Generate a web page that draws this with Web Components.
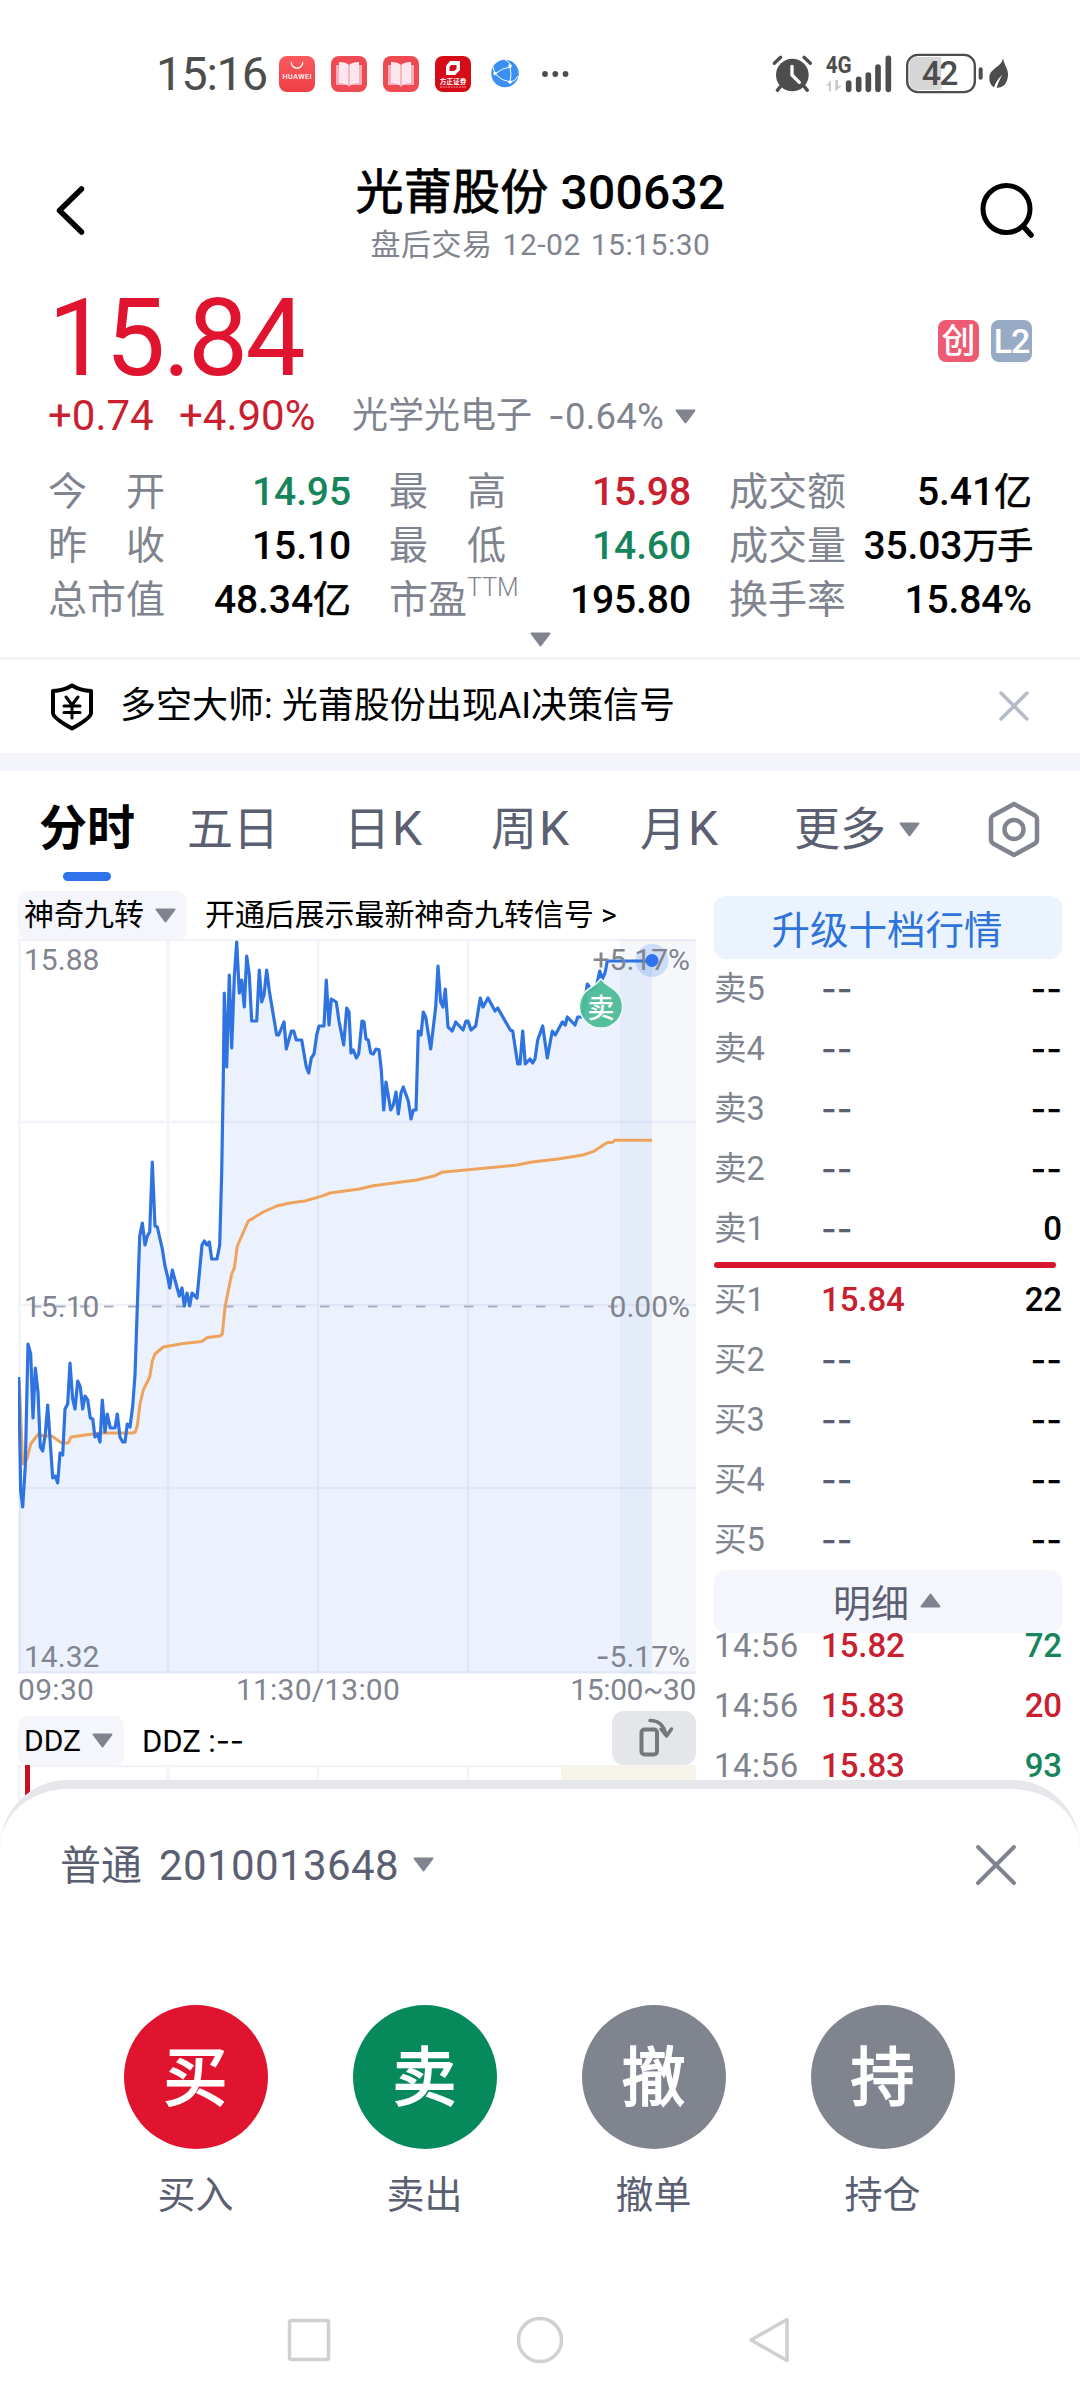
<!DOCTYPE html>
<html lang="zh-CN">
<head>
<meta charset="utf-8">
<title>光莆股份 300632</title>
<style>
html, body {
  margin: 0;
  background: #fff;
}

body {
  --red: #e0142e;
  --red-text: #c8202f;
  --green: #17855c;
  --gray: #80848f;
  --slate: #5a6072;
  --blue: #2f73ec;
  color: #000;
  font-family: Roboto, "Noto Sans CJK SC", sans-serif;
  height: 2400px;
  overflow: hidden;
  width: 1080px;
}
</style>
</head>
<body>
<stock-app></stock-app>

<script>
const define = (name, html, setup) => {
  const template = document.createElement('template');
  template.innerHTML = html;

  window.customElements.define(name, class extends HTMLElement {
    constructor () {
      super();
      this.attachShadow({ mode: 'open' });
      this.shadowRoot.appendChild(template.content.cloneNode(true));
      if (setup) {
        setup(this, this.shadowRoot);
      }
    }
  });
};

// small rounded triangle, pointing down unless [up] is set
define('caret-icon', `<style>
:host {
  display: block;
  flex: none;
  height: 15px;
  width: 21px;
}
:host([up]) {
  transform: scaleY(-1);
}
svg {
  display: block;
}
</style>
<svg width="21" height="15" viewBox="0 0 21 15">
  <path d="M1.500 1.500H19.500L10.500 13.500Z" fill="#80848f" stroke="#80848f" stroke-width="2" stroke-linejoin="round" />
</svg>`);

define('status-bar', `<style>
:host {
  align-items: center;
  box-sizing: border-box;
  color: #4d4d4d;
  display: flex;
  height: 147px;
  padding: 0 70px 0 156px;
}
.time {
  font-size: 47px;
  letter-spacing: -1.2px;
  line-height: 60px;
  width: 123px;
}
.apps {
  display: flex;
  gap: 16px;
}
.dots {
  margin-left: 19px;
}
.system {
  align-items: center;
  display: flex;
  margin-left: auto;
}
svg {
  display: block;
  flex: none;
  overflow: visible;
}
</style>
<div class="time">15:16</div>
<div class="apps">
  <svg width="36" height="36" viewBox="0 0 36 36">
    <defs>
      <linearGradient id="g" x1="0" y1="0" x2="0" y2="1"><stop offset="0" stop-color="#fa5a5d" /><stop offset="1" stop-color="#ee3f46" /></linearGradient>
    </defs>
    <rect width="36" height="36" rx="8" fill="url(#g)" />
    <path d="M12.3 6.5a5.7 5.7 0 0 0 11.4 0" fill="none" stroke="#fff" stroke-width="1.3" stroke-linecap="round" />
    <text x="18" y="23" font-size="7.2" font-weight="500" fill="#fff" text-anchor="middle" textLength="29">HUAWEI</text>
  </svg>
  <svg width="36" height="36" viewBox="0 0 36 36">
    <rect width="36" height="36" rx="8" fill="#ee4a52" />
    <path d="M5 9H31V29H20L18 31L16 29H5Z" fill="#f9aebb" />
    <path d="M8 6Q15 6 18 9Q21 6 28 6V27Q21 27 18 30Q15 27 8 27Z" fill="#fde6ee" />
    <path d="M18 8V30" stroke="#ee8793" stroke-width="1" />
  </svg>
  <svg width="36" height="36" viewBox="0 0 36 36">
    <rect width="36" height="36" rx="8" fill="#ee4a52" />
    <path d="M5 9H31V29H20L18 31L16 29H5Z" fill="#f9aebb" />
    <path d="M8 6Q15 6 18 9Q21 6 28 6V27Q21 27 18 30Q15 27 8 27Z" fill="#fde6ee" />
    <path d="M18 8V30" stroke="#ee8793" stroke-width="1" />
  </svg>
  <svg width="36" height="36" viewBox="0 0 36 36">
    <rect width="36" height="36" rx="8" fill="#d50b17" />
    <path d="M15 5H25V14L20 19H11V10Z M16 9L14.500 11V15H19L21.500 13V9Z" fill="#fff" fill-rule="evenodd" />
    <text x="18" y="28" font-size="6.700" font-weight="700" fill="#fff" text-anchor="middle">方正证券</text>
    <path d="M5 31H31" stroke="#f3a0a4" stroke-width="1.200" stroke-dasharray="2 .7" />
  </svg>
  <svg width="36" height="36" viewBox="0 0 36 36">
    <circle cx="18" cy="17.500" r="13.700" fill="#3a8ff0" />
    <path d="M18 4Q24 6 23 11Q15 12 8 18M23 11Q25 18 23 26M8 18Q15 25 23 26Q28 26 31 20M8 18L6 11" fill="none" stroke="#fff" stroke-width="1" />
    <g fill="#fff"><circle cx="23" cy="10" r="1.800" /><circle cx="8" cy="17.500" r="1.800" /><circle cx="23" cy="26" r="1.800" /></g>
  </svg>
</div>
<svg class="dots" width="27" height="8" viewBox="0 0 27 8" fill="#4d4d4d">
  <circle cx="3" cy="4" r="2.900" /><circle cx="13.300" cy="4" r="2.900" /><circle cx="23.500" cy="4" r="2.900" />
</svg>
<div class="system">
  <svg width="41" height="40" viewBox="37 40 123 120">
    <circle cx="98" cy="103" r="49" fill="#4d4d4d" />
    <path d="M44 68L63 50M133 50L152 68M62 138L53 149M134 138L143 149" stroke="#4d4d4d" stroke-width="10" stroke-linecap="round" />
    <path d="M97 77V103L119 125" fill="none" stroke="#fff" stroke-width="10" stroke-linecap="round" stroke-linejoin="round" />
  </svg>
  <svg style="margin-left:12px" width="68" height="40" viewBox="196 40 204 120">
    <text x="198" y="98" font-size="70" font-weight="700" fill="#4d4d4d" textLength="78" lengthAdjust="spacingAndGlyphs">4G</text>
    <path d="M199 135L214 118V152H208V135ZM227 118V152L247 135H235V118Z" fill="#c9c9c9" />
    <path d="M267 127V146M297 116V146M326 103V146M355 79V146M386 53V146" stroke="#4d4d4d" stroke-width="17" stroke-linecap="round" />
  </svg>
  <svg style="margin-left:12px" width="80" height="41" viewBox="436 38 240 123">
    <path d="M545 50H474Q449 50 449 75V124Q449 149 474 149H545Z" fill="#d6d6d6" />
    <rect x="442.500" y="43.500" width="203" height="112" rx="32" fill="none" stroke="#4d4d4d" stroke-width="7" />
    <text x="486" y="135" font-size="101" font-weight="500" fill="#4d4d4d" textLength="110">42</text>
    <path d="M663 87V112" stroke="#4d4d4d" stroke-width="12" stroke-linecap="round" />
  </svg>
  <svg style="margin-left:3px" width="22" height="33" viewBox="688 48 66 99">
    <path d="M733 51C736 72 750 84 748 105Q745 139 714 141Q718 124 731 101Q712 119 706 139Q691 131 692 108C695 80 729 80 733 51Z" fill="#4d4d4d" />
  </svg>
</div>`);

define('quote-header', `<style>
:host {
  align-items: center;
  box-sizing: border-box;
  display: flex;
  height: 126px;
  justify-content: space-between;
  padding: 0 43px 0 54px;
}
.title {
  padding: 7px 0 0 14px;
  text-align: center;
}
h1 {
  font-size: 48px;
  font-weight: 500;
  letter-spacing: 0.2px;
  line-height: 60px;
  margin: 0;
}
.cn {
  font-weight: 400;
  -webkit-text-stroke: 0.8px #000;
}
p {
  color: var(--gray);
  font-size: 30px;
  letter-spacing: 0.5px;
  line-height: 40px;
  margin: 2px 0 0;
  word-spacing: 2px;
}
</style>
<svg width="34" height="54" viewBox="0 0 34 54">
  <path d="M27.500 6L5.500 27.500L27.500 49" fill="none" stroke="#000" stroke-width="5.500" stroke-linecap="round" stroke-linejoin="round" />
</svg>
<div class="title">
  <h1><span class="cn">光莆股份</span> 300632</h1>
  <p>盘后交易 12-02 15:15:30</p>
</div>
<svg width="58" height="58" viewBox="0 0 58 58">
  <circle cx="27.500" cy="28" r="23.500" fill="none" stroke="#000" stroke-width="5" />
  <path d="M44 45L52 54" stroke="#000" stroke-width="5.500" stroke-linecap="round" />
</svg>`);

define('stat-item', `<style>
:host {
  align-items: center;
  display: flex;
  font-size: 39px;
  height: 54px;
  justify-content: space-between;
  line-height: 54px;
  white-space: nowrap;
}
.label {
  color: var(--gray);
}
.value {
  font-weight: 500;
  letter-spacing: -0.1px;
}
:host([up]) .value {
  color: var(--red-text);
}
:host([down]) .value {
  color: var(--green);
}
::slotted(sup) {
  font-size: 25px;
  font-weight: 300;
  line-height: 0;
  vertical-align: 17px;
}
::slotted(i) {
  font-size: 38px;
  font-style: normal;
  font-weight: 400;
  letter-spacing: 0;
  -webkit-text-stroke: 0.6px #000;
}
::slotted(i.pair) {
  font-size: 36px;
  letter-spacing: -1.2px;
}
</style>
<span class="label"><slot name="label"></slot><slot name="note"></slot></span>
<span class="value"><slot></slot></span>`);

define('price-panel', `<style>
:host {
  border-bottom: 3px solid #f3f4f6;
  box-sizing: border-box;
  display: block;
  height: 387px;
  padding: 6px 48px 0;
}
.top {
  align-items: center;
  display: flex;
  height: 120px;
}
.price {
  color: var(--red);
  flex: 1;
  font-size: 107px;
  letter-spacing: -2.8px;
  line-height: 120px;
}
.badge {
  background: #ee5a71;
  border-radius: 8px;
  color: #fff;
  font-size: 34px;
  font-weight: 500;
  height: 42px;
  line-height: 42px;
  margin: 4px 0 0 12px;
  text-align: center;
  width: 41px;
}
.badge.level {
  background: #98abc5;
  letter-spacing: -1px;
}
.change {
  align-items: center;
  color: var(--red-text);
  display: flex;
  font-size: 42px;
  height: 34px;
  line-height: 34px;
}
.change b {
  font-weight: 400;
  letter-spacing: 0;
  width: 131px;
}
.change b + b {
  width: 173px;
}
.sector {
  color: var(--gray);
  font-size: 36px;
  margin-right: 16px;
}
.sector-change {
  color: var(--gray);
  font-size: 36.5px;
  letter-spacing: 0.2px;
  margin-right: 11px;
}
.dash {
  font-family: Inter, sans-serif;
}
.stats {
  display: grid;
  gap: 0 38px;
  grid-template-columns: 303px 302px 303px;
  margin-top: 32px;
}
.more {
  display: flex;
  justify-content: center;
  margin-top: 5px;
}
</style>
<div class="top">
  <div class="price">15.84</div>
  <div class="badge">创</div>
  <div class="badge level">L2</div>
</div>
<div class="change">
  <b>+0.74</b><b>+4.90%</b>
  <span class="sector">光学光电子</span>
  <span class="sector-change"><span class="dash">-</span>0.64%</span>
  <caret-icon></caret-icon>
</div>
<div class="stats">
  <stat-item down><span slot="label">今　开</span>14.95</stat-item>
  <stat-item up><span slot="label">最　高</span>15.98</stat-item>
  <stat-item><span slot="label">成交额</span>5.41<i>亿</i></stat-item>
  <stat-item><span slot="label">昨　收</span>15.10</stat-item>
  <stat-item down><span slot="label">最　低</span>14.60</stat-item>
  <stat-item><span slot="label">成交量</span>35.03<i class="pair">万手</i></stat-item>
  <stat-item><span slot="label">总市值</span>48.34<i>亿</i></stat-item>
  <stat-item><span slot="label">市盈</span><sup slot="note">TTM</sup>195.80</stat-item>
  <stat-item><span slot="label">换手率</span>15.84%</stat-item>
</div>
<div class="more"><caret-icon></caret-icon></div>`);

define('notice-bar', `<style>
:host {
  align-items: center;
  border-bottom: 18px solid #f4f5fa;
  display: flex;
  font-size: 36px;
  height: 93px;
  padding: 0 49px;
}
span {
  flex: 1;
  line-height: 40px;
  padding: 0 0 1px 25px;
}
</style>
<svg width="46" height="50" viewBox="0 0 46 50" fill="none" stroke="#000" stroke-linejoin="round" stroke-linecap="round">
  <path d="M23 3.500Q31 8.500 42 9V31Q42 36 23 46.500Q4 36 4 31V9Q15 8.500 23 3.500Z" stroke-width="4" />
  <path d="M17 15L23 23L29 15M23 23V36M15 24H31M15 30.500H31" stroke-width="3" />
</svg>
<span><slot></slot></span>
<svg width="34" height="34" viewBox="0 0 34 34">
  <path d="M4 3L30 29M30 3L4 29" stroke="#b5bcc8" stroke-width="3.500" stroke-linecap="round" />
</svg>`);

define('tab-bar', `<style>
:host {
  align-items: center;
  box-sizing: border-box;
  color: var(--slate);
  display: grid;
  font-size: 46px;
  grid-template-columns: 148px 157px 147px 149px 154px 1fr auto;
  height: 114px;
  line-height: 60px;
  padding: 2px 39px 0;
}
.tab {
  align-items: center;
  display: flex;
  gap: 13px;
}
.latin {
  font-size: 48px;
  margin-left: -11px;
}
.active {
  color: #000;
  font-size: 48px;
  font-weight: 700;
  position: relative;
}
.active::after {
  background: var(--blue);
  border-radius: 5px;
  bottom: -22px;
  content: "";
  height: 9px;
  left: 24px;
  position: absolute;
  width: 48px;
}
</style>
<div class="tab active">分时</div>
<div class="tab">五日</div>
<div class="tab">日<span class="latin">K</span></div>
<div class="tab">周<span class="latin">K</span></div>
<div class="tab">月<span class="latin">K</span></div>
<div class="tab">更多<caret-icon></caret-icon></div>
<svg width="54" height="58" viewBox="0 0 54 58" fill="none" stroke="#80848f" stroke-width="4.500" stroke-linejoin="round">
  <path d="M27 4L48 15.500Q50 17 50 19V40Q50 42 48 43.500L27 55L6 43.500Q4 42 4 40V19Q4 17 6 15.500Z" />
  <circle cx="27" cy="29.500" r="9.500" />
</svg>`);

define('pick-box', `<style>
:host {
  align-items: center;
  background: #f5f6fb;
  border-radius: 10px;
  box-sizing: border-box;
  display: flex;
  font-size: 30px;
  gap: 11px;
  padding: 0 11px 0 6px;
}
</style>
<slot></slot><caret-icon></caret-icon>`);

const prices = `18.7,1377 20.7,1491 22.7,1507 25.3,1466 28,1344 30.7,1354 33,1418 35.3,1368 38,1392 40.3,1447 42.7,1451
45.3,1434 47.7,1405 52.7,1478 55.3,1476 57.7,1483 60,1453 62.7,1455 65,1409 67.7,1404 70,1363 72.7,1399 75,1409
77.7,1381 80.3,1387 82.7,1409 85,1396 87.7,1400 90.3,1418 92.7,1419 95,1437 97.7,1434 100,1442 102.3,1400 105,1432
107.3,1414 110.3,1428 115,1428 117.3,1414 120,1437 122.7,1442 125,1442 127.3,1424 130,1427 132.7,1406 135,1375
137.3,1307 139.7,1236 142.3,1223 145,1245 147.3,1236 149.7,1232 152.3,1162 155,1226 157.3,1227 162.3,1249 165,1266
167.7,1277 169.7,1288 172.3,1270 179.3,1296 182,1288 184.3,1306 187,1293 189.7,1306 192,1293 197,1298 202,1245
204.3,1241 207,1245 209.3,1242 211.7,1259 217,1259 219.7,1245 221.7,1173 223.3,1078 224.3,993 226.7,1067 229.3,975
231.7,1048 234.3,977 236.7,942 239.3,993 241.7,980 244.3,1007 246.7,956 249.3,975 251.7,1021 256.7,1021 259.3,970
261.7,1002 264,995 266.7,970 269.3,991 276.7,1035 278.7,1035 284,1022 286.3,1049 291.3,1031 293.7,1031 296.3,1040
301.7,1040 306.3,1067 308.7,1073 311.3,1058 314,1054 316.7,1035 319,1026 324,1026 326.3,980 329,1025 331.3,999
336.3,1002 339,1021 343.7,1045 346.7,1008 349,1012 351,1053 353.3,1050 356.3,1058 358.7,1054 362,1021 364,1022
366,1039 368.3,1040 370.7,1053 373.3,1054 376,1049 379,1049.7 381.3,1070 383.7,1110 386,1082 390.7,1110 393.3,1105
396,1092 398.3,1114 401,1093 403.3,1087 408.3,1101 411,1119 413.3,1110 416,1110 418.3,1031 421,1035 423.3,1012
425.7,1017 430.7,1049 435.7,1007 438,966 440.7,1002 443,1007 445.3,989 448,1027 452.3,1031 455.7,1022 463,1030
466,1021 468,1021 471,1030 475.7,1026 480.3,998 483,1007 488,998 495,1011 497.7,1008 510.3,1030 512.7,1031
517.7,1064 520,1064 522.7,1031 525.3,1064 530,1059 532.7,1063 535,1059 537.7,1040 542.7,1026 547.3,1058 552.3,1031
555.3,1035 562.3,1022 565.3,1025 567.3,1017 575,1025 577.7,1017 582.7,1017 585,1000 587.3,984 591.7,990 596.7,985
599.7,971 602.3,979 605,973 607.3,961 652,961`;

const averages = `19.3,1381 22.7,1464 26.7,1460 30.7,1444 38.3,1434 43.3,1436 51.7,1436 61.7,1443 68.3,1443 71,1437
100,1433 132.7,1433 135.3,1432 137.3,1426 140,1404 143.3,1390 149.7,1377 152.3,1361 155,1354 163.3,1347 183.3,1343.5
201.7,1341.5 207.3,1337.6 220,1336 222.3,1334 225,1307 231.7,1274 234.3,1268 237.3,1246 241.3,1237 248.3,1221
263.3,1212 276.7,1206 290,1203 305,1201 323.3,1195.6 330,1193 359.3,1189 372,1186 388,1183.7 416.7,1180 435,1175.7
441.7,1172.3 486.7,1168 517,1165 532,1162 558,1159 583,1155 593,1151.7 607,1142.7 612.7,1142.3 614.7,1140.3 652,1140.3`;

define('minute-chart', `<style>
:host {
  display: block;
}
svg {
  display: block;
}
text {
  fill: #80848f;
  font-size: 30px;
}
.end {
  text-anchor: end;
}
.axis {
  color: var(--gray);
  display: flex;
  font-size: 30px;
  justify-content: space-between;
  line-height: 32px;
}
.axis span {
  flex: 1;
}
.axis span:first-child {
  letter-spacing: 0.3px;
}
.axis span:nth-child(2) {
  letter-spacing: 0.2px;
  margin: 0 39px 0 -39px;
  text-align: center;
}
.axis span:last-child {
  letter-spacing: -0.4px;
  text-align: right;
}
</style>
<svg width="678" height="735" viewBox="18 939 678 735">
  <g fill="none" stroke="#f1f3f9" stroke-width="2.500">
    <path d="M18 940H696M19.500 940V1673M168 940V1673M318 940V1673M468 940V1673M18 1122H696M18 1305H696M18 1488H696M18 1672.500H696" />
  </g>
  <polygon class="area" fill="#2f73ec" fill-opacity="0.09" />
  <rect x="620" y="939" width="76" height="735" fill="#bec8e1" fill-opacity="0.15" />
  <path d="M32 1306.500H620" stroke="#a9afc4" stroke-width="2" stroke-dasharray="9.500 14.500" />
  <polyline class="average" fill="none" stroke="#eea35d" stroke-width="3" stroke-linejoin="round" />
  <polyline class="price" fill="none" stroke="#2f73e0" stroke-width="3.200" stroke-linejoin="round" />
  <circle cx="652" cy="960.500" r="16.500" fill="#2f73ec" fill-opacity="0.2" />
  <circle cx="652" cy="960.500" r="6.500" fill="#2f73ec" />
  <path d="M601 979Q605 984 612 988A21.500 21.500 0 1 1 590 988Q597 984 601 979Z" fill="#4dba97" fill-opacity="0.95" stroke="#e9f8f4" stroke-width="1.500" />
  <text x="601" y="1018" style="fill:#fff;font-size:27px;font-weight:500;text-anchor:middle">卖</text>
  <text x="24" y="970">15.88</text>
  <text x="24" y="1317">15.10</text>
  <text x="24" y="1667">14.32</text>
  <text class="end" x="690" y="970">+5.17%</text>
  <text class="end" x="690" y="1317">0.00%</text>
  <text class="end" x="690" y="1667"><tspan font-family="Inter">-</tspan>5.17%</text>
</svg>
<div class="axis"><span>09:30</span><span>11:30/13:00</span><span>15:00~30</span></div>`, (host, root) => {
  root.querySelector('.price').setAttribute('points', prices);
  root.querySelector('.average').setAttribute('points', averages);
  root.querySelector('.area').setAttribute('points', `${prices} 652,1673 18.7,1673`);
});

define('chart-column', `<style>
:host {
  display: block;
  padding-top: 6px;
}
.tools {
  align-items: center;
  display: flex;
  font-size: 30px;
  height: 48px;
  line-height: 40px;
}
.tools pick-box {
  height: 49px;
  margin-right: 18px;
}
.tools .name {
  flex: 1;
  letter-spacing: -0.1px;
}
.tools.sub {
  height: 55px;
  margin-top: 4px;
}
.sub pick-box {
  height: 50px;
  margin-top: 6px;
}
.sub .name {
  font-size: 31px;
  padding-top: 7px;
}
.dash {
  font-family: Inter, sans-serif;
}
.turn {
  background: #e4e6ea;
  border-radius: 12px;
  box-sizing: border-box;
  height: 54px;
  padding: 6px 0 0 23px;
  width: 84px;
}
svg {
  display: block;
}
</style>
<div class="tools">
  <pick-box>神奇九转</pick-box>
  <span class="name">开通后展示最新神奇九转信号 &gt;</span>
</div>
<minute-chart></minute-chart>
<div class="tools sub">
  <pick-box>DDZ</pick-box>
  <span class="name">DDZ :<span class="dash">--</span></span>
  <div class="turn">
    <svg width="40" height="42" viewBox="0 0 40 42" fill="none" stroke="#75777b" stroke-width="4" stroke-linecap="round" stroke-linejoin="round">
      <rect x="6.500" y="12.500" width="15.500" height="25" rx="3" />
      <path d="M15 3.500Q28 3.500 31 18M26 12L31.500 19L36.500 12" stroke-width="3.500" />
    </svg>
  </div>
</div>
<svg width="678" height="90" viewBox="18 1765 678 90">
  <rect x="561" y="1764" width="135" height="91" fill="#f7f4ec" />
  <path d="M18 1766H561M19 1765V1855M168 1765V1855M318 1765V1855M468 1765V1855" stroke="#f1f3f9" stroke-width="2.500" />
  <rect x="25" y="1764" width="5" height="60" fill="#c8101f" />
</svg>`);

define('order-row', `<style>
:host {
  align-items: center;
  color: #000;
  display: grid;
  font-size: 33px;
  grid-template-columns: 107px 1fr auto;
  height: 60px;
  letter-spacing: -0.1px;
  line-height: 60px;
}
.label {
  color: var(--gray);
  font-size: 32.5px;
}
:host([sell]) .label, :host([buy]) .label {
  font-size: 33px;
  letter-spacing: 0.5px;
}
.price {
  color: var(--red-text);
  font-weight: 500;
}
.count {
  font-weight: 500;
}
:host([sell]) .count {
  color: var(--green);
}
:host([buy]) .count {
  color: var(--red-text);
}
.none {
  color: var(--slate);
}
.none, .count.none {
  font-family: Inter, sans-serif;
  font-size: 34px;
  letter-spacing: 0;
}
.count.none {
  color: #000;
}
</style>
<span class="label"></span><span class="price"></span><span class="count"></span>`, (host, root) => {
  ['label', 'price', 'count'].forEach(key => {
    const el = root.querySelector(`.${key}`);
    el.textContent = host.getAttribute(key);
    el.classList.toggle('none', el.textContent === '--');
  });
});

define('order-book', `<style>
:host {
  display: block;
  padding-top: 11px;
}
.upgrade, .detail {
  align-items: center;
  border-radius: 12px;
  box-sizing: border-box;
  display: flex;
  font-size: 38.5px;
  height: 63px;
  justify-content: center;
  padding: 0 2px 2px 0;
}
.upgrade {
  background: #ebf3ff;
  color: #2f73dc;
}
.detail {
  background: #f4f6fb;
  color: var(--slate);
  font-size: 38px;
  gap: 11px;
  position: relative;
}
hr {
  background: #d8152f;
  border: 0;
  border-radius: 3px;
  height: 6px;
  margin: 3px 6px 2px 0;
}
.trades {
  margin-top: -17px;
}
</style>
<div class="upgrade">升级十档行情</div>
<div class="orders">
  <order-row label="卖5" price="--" count="--"></order-row>
  <order-row label="卖4" price="--" count="--"></order-row>
  <order-row label="卖3" price="--" count="--"></order-row>
  <order-row label="卖2" price="--" count="--"></order-row>
  <order-row label="卖1" price="--" count="0"></order-row>
</div>
<hr>
<div class="orders">
  <order-row label="买1" price="15.84" count="22"></order-row>
  <order-row label="买2" price="--" count="--"></order-row>
  <order-row label="买3" price="--" count="--"></order-row>
  <order-row label="买4" price="--" count="--"></order-row>
  <order-row label="买5" price="--" count="--"></order-row>
</div>
<div class="detail">明细<caret-icon up></caret-icon></div>
<div class="trades">
  <order-row label="14:56" price="15.82" count="72" sell></order-row>
  <order-row label="14:56" price="15.83" count="20" buy></order-row>
  <order-row label="14:56" price="15.83" count="93" sell></order-row>
</div>`);

define('round-action', `<style>
:host {
  align-items: center;
  color: var(--slate);
  display: flex;
  flex-direction: column;
  font-size: 38px;
  width: 144px;
}
.disc {
  background: var(--disc, #80848f);
  border-radius: 50%;
  color: #fff;
  font-size: 64px;
  height: 144px;
  line-height: 147px;
  margin-bottom: 20px;
  text-align: center;
  -webkit-text-stroke: 1.8px #fff;
  width: 144px;
}
.name {
  line-height: 52px;
}
</style>
<div class="disc"><slot name="mark"></slot></div>
<div class="name"><slot></slot></div>`);

define('trade-sheet', `<style>
:host {
  background: #fff;
  border-radius: 68px 68px 0 0;
  border-top: 9px solid #e5e7eb;
  bottom: 0;
  box-sizing: border-box;
  display: block;
  height: 620px;
  left: 0;
  position: absolute;
  width: 1080px;
}
.account {
  align-items: center;
  color: var(--slate);
  display: flex;
  font-size: 42px;
  height: 60px;
  line-height: 62px;
  padding: 47px 62px 0 60px;
}
.account .kind {
  font-size: 41px;
  margin-right: 17px;
}
.account .number {
  letter-spacing: 0.4px;
}
.account caret-icon {
  margin: -3px 0 0 14px;
}
.account svg {
  margin: -2px 0 0 auto;
}
.actions {
  display: flex;
  gap: 85px;
  justify-content: center;
  margin: 109px 0 0 -2px;
}
.keys {
  align-items: center;
  display: flex;
  gap: 185px;
  justify-content: center;
  margin-top: 94px;
}
</style>
<div class="account">
  <span class="kind">普通</span><span class="number">2010013648</span>
  <caret-icon></caret-icon>
  <svg width="44" height="44" viewBox="0 0 44 44">
    <path d="M4 4L40 40M40 4L4 40" stroke="#80848f" stroke-width="4" stroke-linecap="round" />
  </svg>
</div>
<div class="actions">
  <round-action style="--disc:#e0142e"><span slot="mark">买</span>买入</round-action>
  <round-action style="--disc:#068a5c"><span slot="mark">卖</span>卖出</round-action>
  <round-action><span slot="mark">撤</span>撤单</round-action>
  <round-action><span slot="mark">持</span>持仓</round-action>
</div>
<div class="keys">
  <svg width="46" height="50" viewBox="0 0 46 50"><rect x="3.500" y="5.500" width="39" height="39" rx="2" fill="none" stroke="#d0d0d0" stroke-width="3.500" /></svg>
  <svg width="46" height="50" viewBox="0 0 46 50"><circle cx="23" cy="25" r="21.500" fill="none" stroke="#d0d0d0" stroke-width="3.500" /></svg>
  <svg width="46" height="50" viewBox="0 0 46 50"><path d="M39 4.500V45.500L3 25Z" fill="none" stroke="#d0d0d0" stroke-width="3.500" stroke-linejoin="round" /></svg>
</div>`);

define('stock-app', `<style>
:host {
  display: block;
  height: 2400px;
  overflow: hidden;
  position: relative;
  width: 1080px;
}
.market {
  display: grid;
  gap: 18px;
  grid-template-columns: 678px 348px;
  padding-left: 18px;
}
</style>
<status-bar></status-bar>
<quote-header></quote-header>
<price-panel></price-panel>
<notice-bar>多空大师: 光莆股份出现AI决策信号</notice-bar>
<tab-bar></tab-bar>
<div class="market">
  <chart-column></chart-column>
  <order-book></order-book>
</div>
<trade-sheet></trade-sheet>`);
</script>
</body>
</html>
